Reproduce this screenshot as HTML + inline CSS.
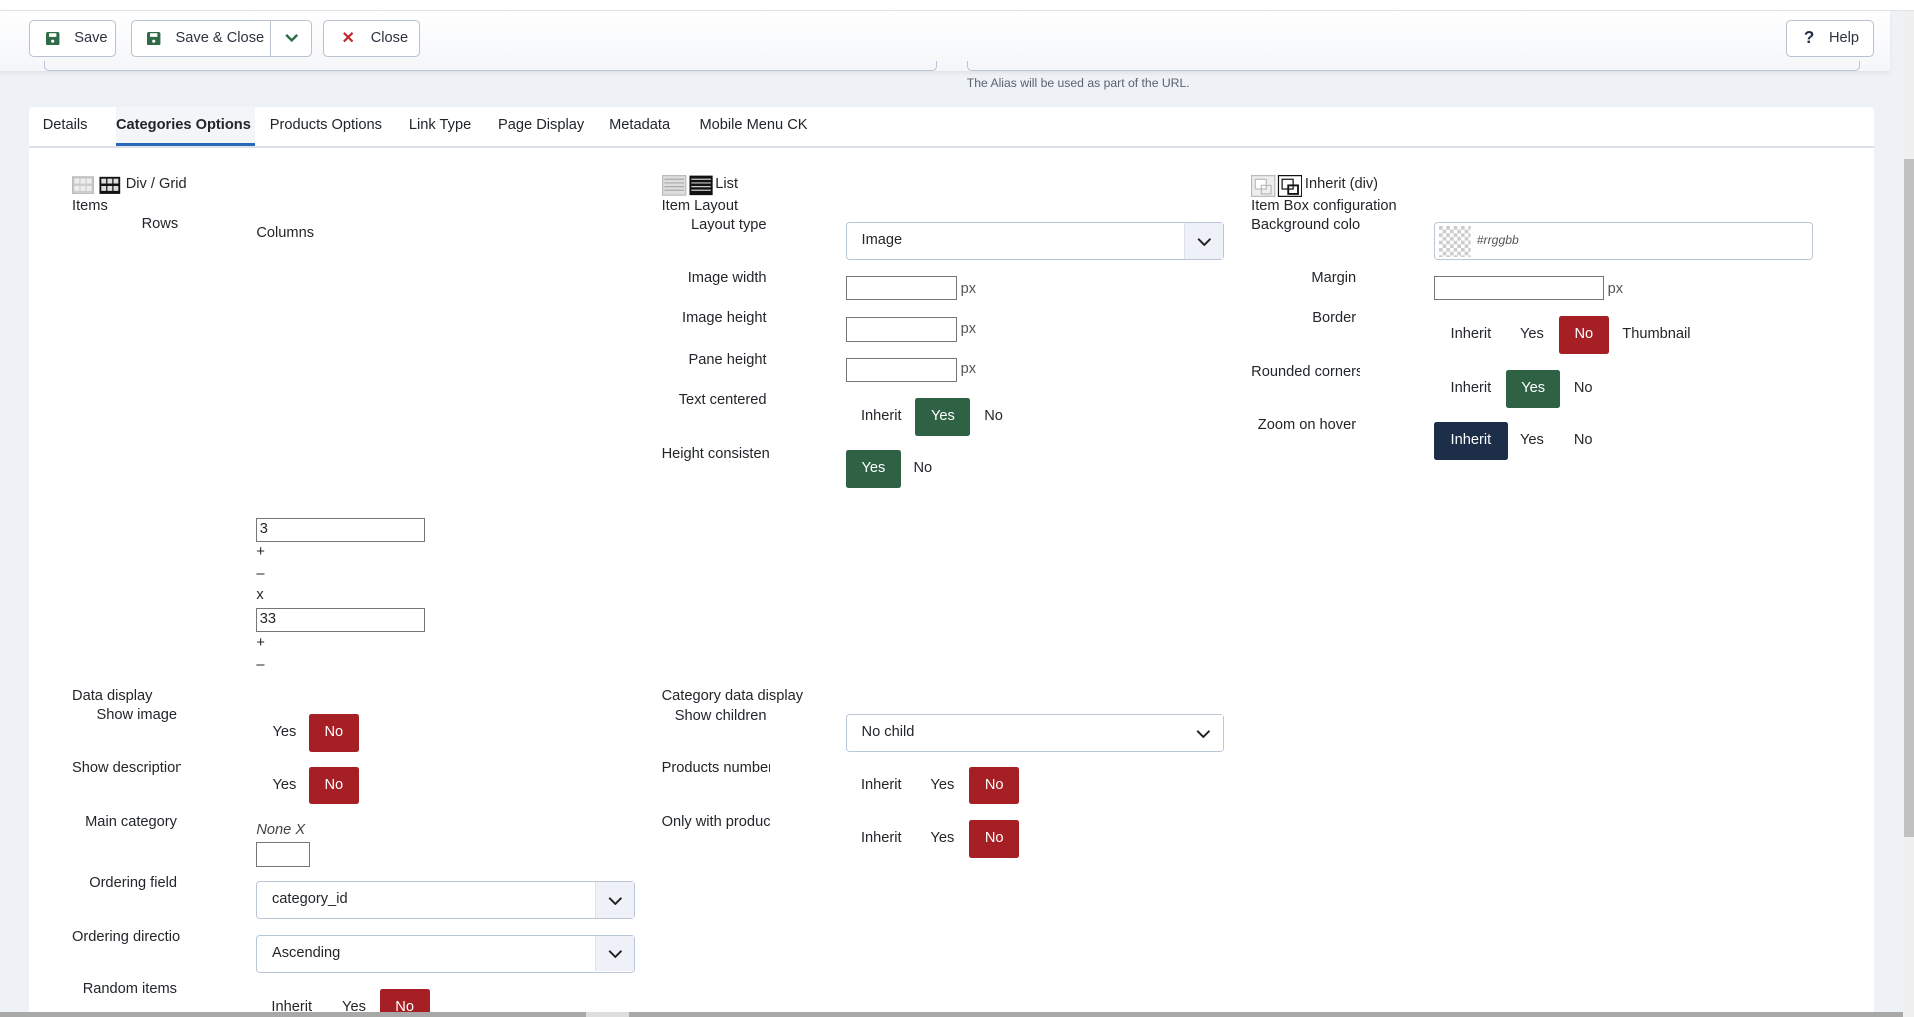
<!DOCTYPE html>
<html><head><meta charset="utf-8"><style>
*{box-sizing:border-box;margin:0;padding:0}
html,body{width:1914px;height:1017px;overflow:hidden;background:#eef1f6}
#w{zoom:1.22066;width:1568px;height:833px;position:relative;font-family:"Liberation Sans",sans-serif;font-size:12px;color:#22262a;background:#eef1f6}
.a{position:absolute;white-space:nowrap}
.btn{position:absolute;top:16px;height:31px;border:1px solid #b9c3cf;border-radius:4px;background:#fff;display:flex;align-items:center;font-size:12px;color:#2c3440}
.inp{position:absolute;border:1px solid #767676;background:#fff;height:20px}
.sel{position:absolute;height:31px;border:1px solid #b8c6d8;border-radius:3px;background:#fff;padding-left:12px;line-height:29px;font-size:12px}
.sel .c{position:absolute;right:0;top:0;width:32px;height:29px;background:#eef2f8;border-left:1px solid #dde3ea}
.tg{position:absolute;height:31px;line-height:31px;text-align:center;font-size:12px;color:#22262a}
.g{background:#2f6144;color:#fff;border-radius:2px}
.r{background:#a51f24;color:#fff;border-radius:2px}
.n{background:#1c2e48;color:#fff;border-radius:2px}
.lbl{position:absolute;text-align:right;white-space:nowrap;overflow:hidden}
</style></head><body><div id="w">
<div class="a" style="left:0;top:0;width:1568px;height:9px;background:#fff;border-bottom:1px solid #dfe3e8"></div>
<div class="a" style="left:0;top:9px;width:1548px;height:49px;background:linear-gradient(#fff,#f4f6f9);box-shadow:0 2px 3px rgba(0,0,0,.06)"></div>
<div class="btn" style="left:24px;width:71px"><svg style="margin-left:13px" width="11" height="11" viewBox="0 0 11 11"><rect x="0" y="0" width="11" height="11" rx="1.5" fill="#2f6b46"/><rect x="2.5" y="1" width="6" height="3" fill="#fff"/><circle cx="5.5" cy="7.5" r="1.3" fill="#fff"/></svg><span style="margin-left:12px">Save</span></div>
<div class="btn" style="left:107px;width:149px"><svg style="margin-left:13px" width="11" height="11" viewBox="0 0 11 11"><rect x="0" y="0" width="11" height="11" rx="1.5" fill="#2f6b46"/><rect x="2.5" y="1" width="6" height="3" fill="#fff"/><circle cx="5.5" cy="7.5" r="1.3" fill="#fff"/></svg><span style="margin-left:12px">Save &amp; Close</span><span style="position:absolute;left:113px;top:0;height:29px;border-left:1px solid #b9c3cf;width:35px"><svg style="position:absolute;left:12px;top:10px" width="11" height="8" viewBox="0 0 11 8"><path d="M1 1.5L5.5 6 10 1.5" stroke="#2f6b46" stroke-width="2" fill="none"/></svg></span></div>
<div class="btn" style="left:265px;width:79px"><span style="margin-left:14px;color:#c1272d;font-weight:bold;font-size:13px">✕</span><span style="margin-left:13px">Close</span></div>
<div class="btn" style="left:1463px;width:72px"><span style="margin-left:14px;font-weight:bold;font-size:14px;color:#1c2e48">?</span><span style="margin-left:12px">Help</span></div>
<div class="a" style="left:36px;top:50px;width:732px;height:8px;border:1px solid #b8c6d8;border-top:none;border-radius:0 0 4px 4px"></div>
<div class="a" style="left:792px;top:50px;width:732px;height:8px;border:1px solid #b8c6d8;border-top:none;border-radius:0 0 4px 4px"></div>
<div class="a" style="left:792px;top:62px;font-size:10px;color:#5a636e">The Alias will be used as part of the URL.</div>
<div class="a" style="left:24px;top:88px;width:1511px;height:745px;background:#fff;border-radius:4px 4px 0 0"></div>
<div class="a" style="left:24px;top:120px;width:1511px;height:1px;background:#dbe2ea"></div>
<div class="a" style="left:95px;top:88px;width:114px;height:32px;background:#f3f5f8;border-bottom:3px solid #2a69b8"></div>
<div class="a" style="left:35px;top:96px">Details</div>
<div class="a" style="left:95px;top:96px;font-weight:bold">Categories Options</div>
<div class="a" style="left:221px;top:96px">Products Options</div>
<div class="a" style="left:335px;top:96px">Link Type</div>
<div class="a" style="left:408px;top:96px">Page Display</div>
<div class="a" style="left:499px;top:96px">Metadata</div>
<div class="a" style="left:573px;top:96px">Mobile Menu CK</div>
<!-- col 1 -->
<svg class="a" style="left:59px;top:143px" width="40" height="16" viewBox="0 0 40 16"><rect x="0.5" y="1.5" width="17" height="14" fill="#ccc" stroke="#bbb"/><g fill="#eee"><rect x="2" y="3" width="4" height="4"/><rect x="7" y="3" width="4" height="4"/><rect x="12" y="3" width="4" height="4"/><rect x="2" y="9" width="4" height="4"/><rect x="7" y="9" width="4" height="4"/><rect x="12" y="9" width="4" height="4"/></g><rect x="22.5" y="1.5" width="17" height="14" fill="#111"/><g fill="#ddd"><rect x="24" y="3" width="4" height="4"/><rect x="29" y="3" width="4" height="4"/><rect x="34" y="3" width="4" height="4"/><rect x="24" y="9" width="4" height="4"/><rect x="29" y="9" width="4" height="4"/><rect x="34" y="9" width="4" height="4"/></g></svg>
<div class="a" style="left:103px;top:144px">Div / Grid</div>
<div class="a" style="left:59px;top:162px">Items</div>
<div class="a" style="left:116px;top:177px">Rows</div>
<div class="a" style="left:210px;top:184px">Columns</div>
<div class="inp" style="left:210px;top:424px;width:138px"><span style="position:absolute;left:2px;top:2px">3</span></div>
<div class="a" style="left:210px;top:446px">+</div>
<div class="a" style="left:210px;top:464px">–</div>
<div class="a" style="left:210px;top:481px">x</div>
<div class="inp" style="left:210px;top:498px;width:138px"><span style="position:absolute;left:2px;top:2px">33</span></div>
<div class="a" style="left:210px;top:520px">+</div>
<div class="a" style="left:210px;top:538px">–</div>
<div class="a" style="left:59px;top:564px">Data display</div>
<div class="lbl" style="left:59px;top:579px;width:86px">Show image</div>
<div class="tg" style="left:218px;top:585px;width:30px">Yes</div>
<div class="tg r" style="left:253px;top:585px;width:41px">No</div>
<div class="lbl" style="left:59px;top:623px;width:89px;text-align:left">Show description</div>
<div class="tg" style="left:218px;top:628px;width:30px">Yes</div>
<div class="tg r" style="left:253px;top:628px;width:41px">No</div>
<div class="lbl" style="left:59px;top:667px;width:86px">Main category</div>
<div class="a" style="left:210px;top:673px;font-style:italic;color:#444">None X</div>
<div class="inp" style="left:210px;top:690px;width:44px"></div>
<div class="lbl" style="left:59px;top:717px;width:86px">Ordering field</div>
<div class="sel" style="left:210px;top:722px;width:310px">category_id<span class="c"><svg style="position:absolute;left:10px;top:11px" width="12" height="8" viewBox="0 0 12 8"><path d="M1 1.5L6 6.5 11 1.5" stroke="#222" stroke-width="1.6" fill="none"/></svg></span></div>
<div class="lbl" style="left:59px;top:761px;width:89px;text-align:left">Ordering direction</div>
<div class="sel" style="left:210px;top:766px;width:310px">Ascending<span class="c"><svg style="position:absolute;left:10px;top:11px" width="12" height="8" viewBox="0 0 12 8"><path d="M1 1.5L6 6.5 11 1.5" stroke="#222" stroke-width="1.6" fill="none"/></svg></span></div>
<div class="lbl" style="left:59px;top:804px;width:86px">Random items</div>
<div class="tg" style="left:218px;top:810px;width:42px">Inherit</div>
<div class="tg" style="left:275px;top:810px;width:30px">Yes</div>
<div class="tg r" style="left:311px;top:810px;width:41px">No</div>
<!-- col 2 -->
<svg class="a" style="left:542px;top:143px" width="42" height="18" viewBox="0 0 42 18"><rect x="0.5" y="0.5" width="19" height="16" fill="#ddd" stroke="#bbb"/><g stroke="#aaa"><path d="M2 3.5h16M2 6.5h16M2 9.5h16M2 12.5h16"/></g><rect x="22.5" y="0.5" width="19" height="16" fill="#111"/><g stroke="#ccc"><path d="M24 3.5h16M24 6.5h16M24 9.5h16M24 12.5h16"/></g></svg>
<div class="a" style="left:586px;top:144px">List</div>
<div class="a" style="left:542px;top:162px">Item Layout</div>
<div class="lbl" style="left:542px;top:178px;width:86px">Layout type</div>
<div class="sel" style="left:693px;top:182px;width:310px">Image<span class="c"><svg style="position:absolute;left:10px;top:11px" width="12" height="8" viewBox="0 0 12 8"><path d="M1 1.5L6 6.5 11 1.5" stroke="#222" stroke-width="1.6" fill="none"/></svg></span></div>
<div class="lbl" style="left:542px;top:221px;width:86px">Image width</div>
<div class="inp" style="left:693px;top:226px;width:91px"></div><div class="a" style="left:787px;top:230px;color:#555">px</div>
<div class="lbl" style="left:542px;top:254px;width:86px">Image height</div>
<div class="inp" style="left:693px;top:260px;width:91px"></div><div class="a" style="left:787px;top:263px;color:#555">px</div>
<div class="lbl" style="left:542px;top:288px;width:86px">Pane height</div>
<div class="inp" style="left:693px;top:293px;width:91px"></div><div class="a" style="left:787px;top:296px;color:#555">px</div>
<div class="lbl" style="left:542px;top:321px;width:86px">Text centered</div>
<div class="tg" style="left:700px;top:326px;width:44px">Inherit</div>
<div class="tg g" style="left:750px;top:326px;width:45px">Yes</div>
<div class="tg" style="left:801px;top:326px;width:26px">No</div>
<div class="lbl" style="left:542px;top:365px;width:89px;text-align:left">Height consistency</div>
<div class="tg g" style="left:693px;top:369px;width:45px">Yes</div>
<div class="tg" style="left:743px;top:369px;width:26px">No</div>
<div class="a" style="left:542px;top:564px">Category data display</div>
<div class="lbl" style="left:542px;top:580px;width:86px">Show children</div>
<div class="sel" style="left:693px;top:585px;width:310px">No child<span class="c" style="background:#fff;border:none"><svg style="position:absolute;left:10px;top:11px" width="12" height="8" viewBox="0 0 12 8"><path d="M1 1.5L6 6.5 11 1.5" stroke="#222" stroke-width="1.6" fill="none"/></svg></span></div>
<div class="lbl" style="left:542px;top:623px;width:89px;text-align:left">Products number</div>
<div class="tg" style="left:700px;top:628px;width:44px">Inherit</div>
<div class="tg" style="left:757px;top:628px;width:30px">Yes</div>
<div class="tg r" style="left:794px;top:628px;width:41px">No</div>
<div class="lbl" style="left:542px;top:667px;width:89px;text-align:left">Only with products</div>
<div class="tg" style="left:700px;top:672px;width:44px">Inherit</div>
<div class="tg" style="left:757px;top:672px;width:30px">Yes</div>
<div class="tg r" style="left:794px;top:672px;width:41px">No</div>
<!-- col 3 -->
<svg class="a" style="left:1025px;top:143px" width="42" height="18" viewBox="0 0 42 18"><rect x="0.5" y="0.5" width="19" height="17" fill="#eee" stroke="#bbb"/><rect x="3.5" y="3.5" width="9" height="8" fill="#fff" stroke="#bbb"/><rect x="8.5" y="8.5" width="8" height="7" fill="none" stroke="#bbb"/><rect x="22.5" y="0.5" width="19" height="17" fill="#fff" stroke="#111"/><rect x="25.5" y="3.5" width="9" height="8" fill="#fff" stroke="#111"/><rect x="30.5" y="8.5" width="8" height="7" fill="none" stroke="#111" stroke-width="1.5"/></svg>
<div class="a" style="left:1069px;top:144px">Inherit (div)</div>
<div class="a" style="left:1025px;top:162px">Item Box configuration</div>
<div class="lbl" style="left:1025px;top:178px;width:89px;text-align:left">Background color</div>
<div class="sel" style="left:1175px;top:182px;width:310px;padding-left:0"><svg style="position:absolute;left:3px;top:2px" width="26" height="26"><defs><pattern id="ck" width="6" height="6" patternUnits="userSpaceOnUse"><rect width="6" height="6" fill="#fff"/><rect width="3" height="3" fill="#ccc"/><rect x="3" y="3" width="3" height="3" fill="#ccc"/></pattern></defs><rect width="26" height="26" fill="url(#ck)"/></svg><span style="position:absolute;left:34px;font-style:italic;font-size:10px;color:#555">#rrggbb</span></div>
<div class="lbl" style="left:1025px;top:221px;width:86px">Margin</div>
<div class="inp" style="left:1175px;top:226px;width:139px"></div><div class="a" style="left:1317px;top:230px;color:#555">px</div>
<div class="lbl" style="left:1025px;top:254px;width:86px">Border</div>
<div class="tg" style="left:1183px;top:259px;width:44px">Inherit</div>
<div class="tg" style="left:1240px;top:259px;width:30px">Yes</div>
<div class="tg r" style="left:1277px;top:259px;width:41px">No</div>
<div class="tg" style="left:1325px;top:259px;width:64px">Thumbnail</div>
<div class="lbl" style="left:1025px;top:298px;width:89px">Rounded corners</div>
<div class="tg" style="left:1183px;top:303px;width:44px">Inherit</div>
<div class="tg g" style="left:1234px;top:303px;width:44px">Yes</div>
<div class="tg" style="left:1284px;top:303px;width:26px">No</div>
<div class="lbl" style="left:1025px;top:342px;width:86px">Zoom on hover</div>
<div class="tg n" style="left:1175px;top:346px;width:60px">Inherit</div>
<div class="tg" style="left:1240px;top:346px;width:30px">Yes</div>
<div class="tg" style="left:1284px;top:346px;width:26px">No</div>
<!-- scrollbars -->
<div class="a" style="left:1559px;top:9px;width:9px;height:824px;background:#f0f0f0"></div>
<div class="a" style="left:1560px;top:130px;width:8px;height:556px;background:#c1c1c1"></div>
<div class="a" style="left:0;top:829px;width:1559px;height:4px;background:#a8a8a8"></div>
<div class="a" style="left:480px;top:829px;width:35px;height:4px;background:#ddd"></div>
</div></body></html>
